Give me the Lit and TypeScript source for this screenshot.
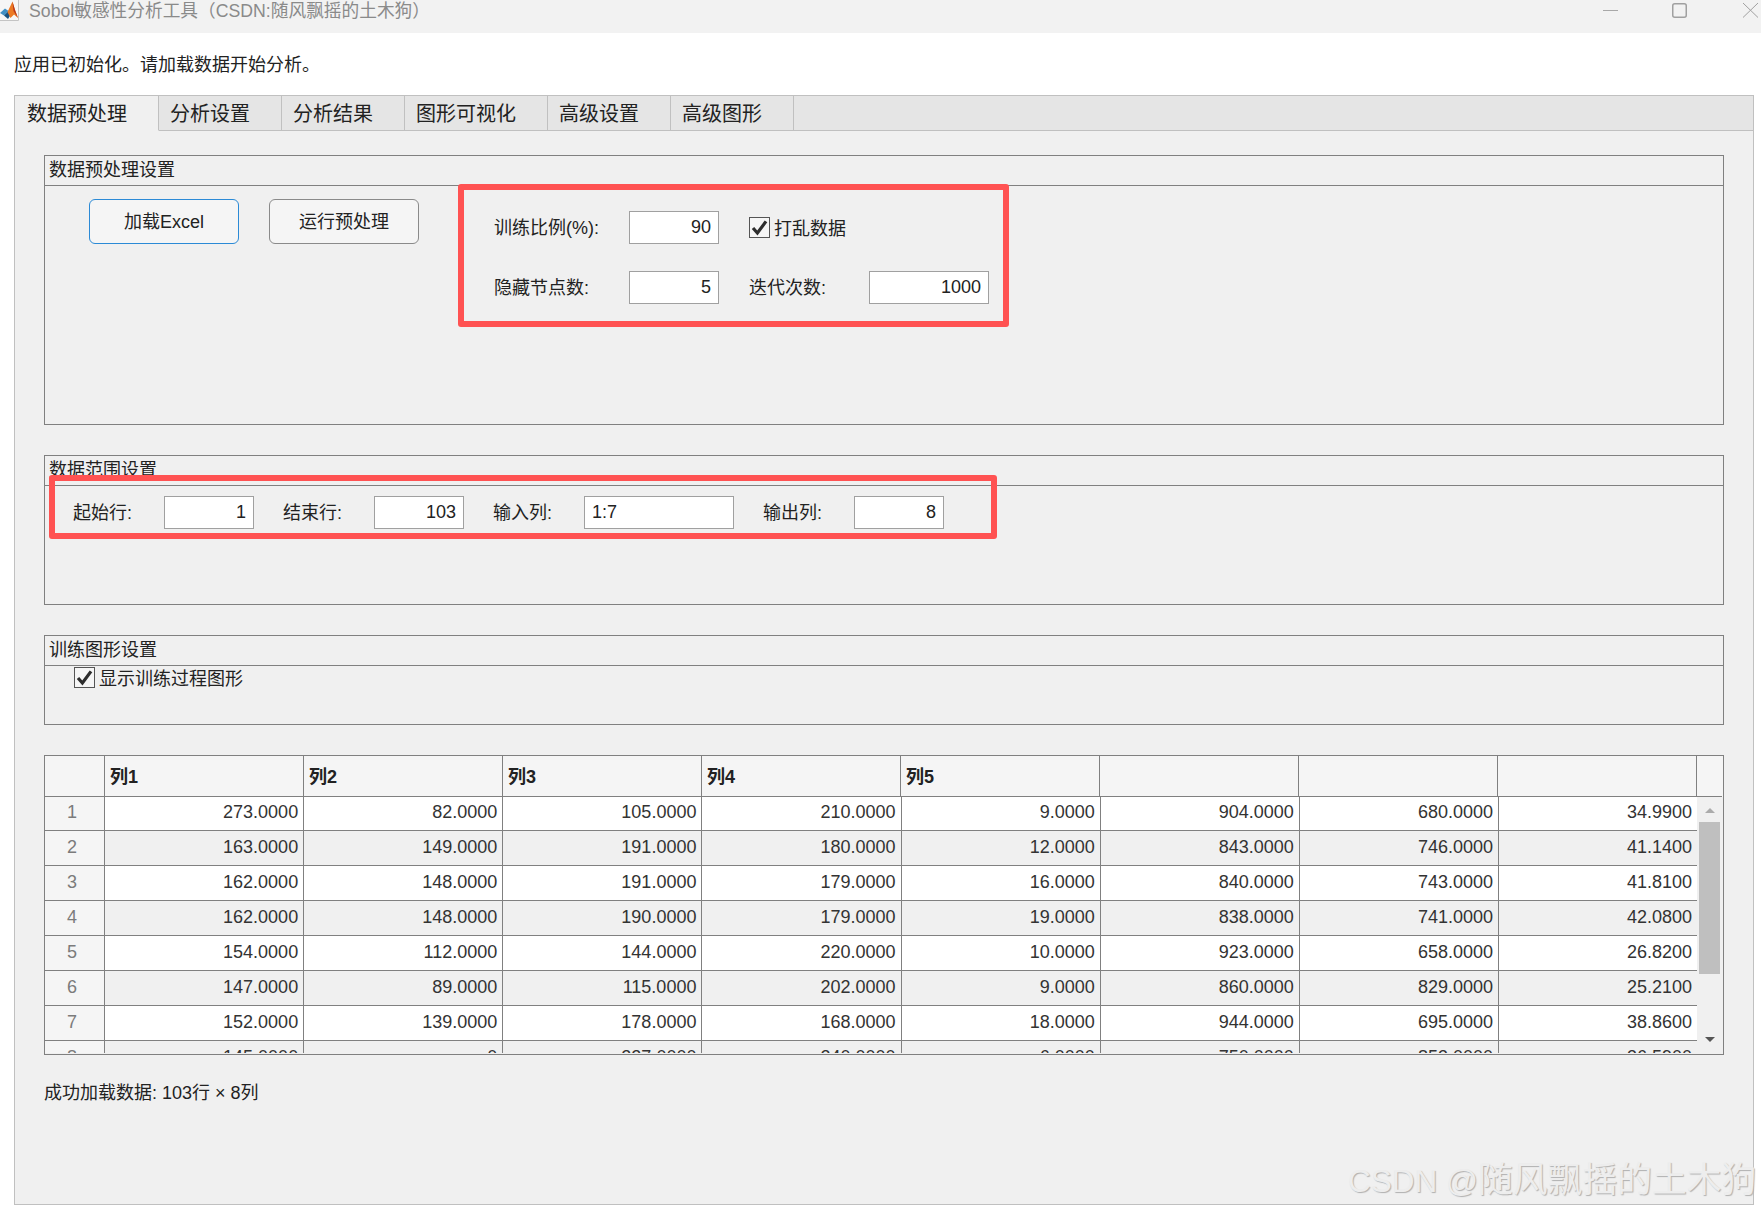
import { LitElement, html, css, svg } from "lit";
import { customElement } from "lit/decorators.js";

const TABS = ["数据预处理", "分析设置", "分析结果", "图形可视化", "高级设置", "高级图形"];
const HEADERS = ["列1", "列2", "列3", "列4", "列5", "", "", ""];
const ROWS: number[][] = [
  [273, 82, 105, 210, 9, 904, 680, 34.99],
  [163, 149, 191, 180, 12, 843, 746, 41.14],
  [162, 148, 191, 179, 16, 840, 743, 41.81],
  [162, 148, 190, 179, 19, 838, 741, 42.08],
  [154, 112, 144, 220, 10, 923, 658, 26.82],
  [147, 89, 115, 202, 9, 860, 829, 25.21],
  [152, 139, 178, 168, 18, 944, 695, 38.86],
  [145, 0, 227, 240, 6, 750, 853, 36.59],
];

const check = svg`<svg class="tick" viewBox="0 0 19 19" width="19" height="19"><path d="M3 10 L7.4 15 L16 3.4" fill="none" stroke="#2e2e2e" stroke-width="3.2"/></svg>`;

@customElement("app-root")
export class AppRoot extends LitElement {
  static styles = css`
    :host {
      display: block;
      position: relative;
      width: 1761px;
      height: 1211px;
      overflow: hidden;
      background: #fff;
      color: #222;
      font: 18px "Liberation Sans", "Noto Sans CJK SC", sans-serif;
    }
    .titlebar {
      display: flex;
      height: 33px;
      background: #f2f2f2;
    }
    .logo { display: block; flex: none; }
    .title {
      margin-left: 10px;
      line-height: 23px;
      font-size: 17.7px;
      color: #8a8a8a;
      flex: 1;
    }
    .winbtns { display: flex; align-items: flex-start; }
    .winbtns svg { display: block; }
    .btn-min { margin-right: 54px; }
    .btn-max { margin-right: 56px; }
    .btn-close { margin-right: 3px; }

    .msg {
      display: flex;
      align-items: center;
      box-sizing: border-box;
      height: 62px;
      padding: 0 0 3px 14px;
    }

    .panel {
      box-sizing: border-box;
      width: 1740px;
      height: 1110px;
      margin-left: 14px;
      border: 1px solid #c0c0c0;
      background: #f0f0f0;
    }
    .tabs {
      display: flex;
      box-sizing: border-box;
      height: 35px;
      background: #e5e5e5;
      border-bottom: 1px solid #c0c0c0;
    }
    .tab {
      box-sizing: border-box;
      height: 35px;
      padding: 1px 31px 0 11px;
      border-right: 1px solid #c0c0c0;
      border-bottom: 1px solid #c0c0c0;
      font-size: 20px;
      line-height: 35px;
    }
    .tab.on {
      padding-left: 12px;
      background: #f0f0f0;
      border-bottom-color: #f0f0f0;
    }
    .body {
      display: flex;
      flex-direction: column;
      gap: 30px;
      padding: 24px 29px 0 29px;
    }

    .group {
      box-sizing: border-box;
      border: 1px solid #808080;
    }
    .g1 { height: 270px; }
    .g2 { height: 150px; }
    .g3 { height: 90px; }
    .group h3 {
      box-sizing: border-box;
      height: 30px;
      margin: 0;
      padding-left: 4px;
      border-bottom: 1px solid #808080;
      font: inherit;
      line-height: 29px;
    }

    .g1-body {
      display: flex;
      align-items: flex-start;
      gap: 30px;
      padding: 13px 0 0 44px;
    }
    .btn {
      box-sizing: border-box;
      width: 150px;
      height: 45px;
      border: 1px solid #8a8a8a;
      border-radius: 6px;
      background: #f5f5f5;
      color: #222;
      font: inherit;
      padding: 0 0 3px;
    }
    .btn.primary { border-color: #2b8ad6; }

    .form {
      position: relative;
      display: grid;
      grid-template-columns: 135px 90px 150px 120px;
      grid-template-rows: 33px 33px;
      row-gap: 27px;
      align-items: center;
      margin: 12px 0 0 45px;
    }
    .form .c3 { margin-left: 30px; }
    .form .wide { grid-column: span 2; }
    label { padding-bottom: 3px; }

    .flag::after {
      content: "";
      position: absolute;
      border: 6px solid #ff5252;
      border-radius: 3px;
      box-sizing: border-box;
      pointer-events: none;
    }
    .form.flag::after { left: -36px; right: -20px; top: -27px; bottom: -23px; }
    .range.flag::after { left: -24px; right: -53px; top: -21px; bottom: -10px; }

    input.field {
      box-sizing: border-box;
      width: 90px;
      height: 33px;
      padding: 0 7px 1px;
      border: 1px solid #a0a0a0;
      background: #fff;
      color: #222;
      font: inherit;
      text-align: right;
      outline: none;
    }
    input.field.left { text-align: left; width: 150px; }
    input.field.w120 { width: 120px; }

    .range {
      position: relative;
      display: flex;
      align-items: center;
      width: fit-content;
      gap: 29px;
      margin: 10px 0 0 28px;
    }
    .rf { display: flex; align-items: center; }
    .rf label { width: 91px; }

    .chk { display: flex; align-items: center; gap: 4px; height: 21px; }
    .chk .box {
      box-sizing: border-box;
      display: block;
      width: 21px;
      height: 21px;
      border: 1px solid #555;
      background: #f6f6f6;
    }
    .chk .txt { padding-bottom: 2px; }
    .tick { display: block; }
    .g3 .chk { margin: 1px 0 0 29px; }

    .table {
      box-sizing: border-box;
      display: flex;
      flex-direction: column;
      height: 300px;
      border: 1px solid #808080;
      background: #f0f0f0;
    }
    .thead {
      display: grid;
      grid-template-columns: 60px repeat(8, 199px) 25px;
      grid-template-rows: 41px;
      height: 41px;
      flex: none;
      background: #f5f5f5;
    }
    .th {
      box-sizing: border-box;
      border-right: 1px solid #808080;
      border-bottom: 1px solid #808080;
      padding: 1px 0 0 5px;
      font-weight: 700;
      line-height: 40px;
    }
    .th.end { border-right: 0; }
    .tbody { display: flex; height: 256px; flex: none; }
    .rows-clip { width: 1652px; overflow: hidden; height: 256px; }
    .rows { margin-top: -1px; }
    .tr {
      display: grid;
      grid-template-columns: 60px repeat(7, 199.15px) 198px;
      height: 35px;
      box-sizing: border-box;
      border-bottom: 1px solid #808080;
      background: #fff;
    }
    .tr:nth-child(even) { background: #f0f0f0; }
    .idx {
      box-sizing: border-box;
      background: #f5f5f5;
      border-right: 1px solid #808080;
      padding-right: 5px;
      text-align: center;
      color: #7b7b7b;
      line-height: 33px;
    }
    .td {
      box-sizing: border-box;
      border-right: 1px solid #808080;
      padding-right: 5px;
      text-align: right;
      color: #333;
      line-height: 32px;
    }
    .td:last-child { border-right: 0; }

    .scroll {
      display: flex;
      flex-direction: column;
      align-items: center;
      width: 25px;
      padding-top: 11px;
      box-sizing: border-box;
    }
    .arrow { display: block; flex: none; }
    .thumb {
      flex: none;
      width: 21px;
      height: 152px;
      margin-top: 9px;
      background: #bfbfbf;
    }
    .arrow.down { margin-top: auto; margin-bottom: 11px; }

    .status { line-height: 16px; color: #222; }

    .mark {
      position: absolute;
      left: 1348px;
      top: 1158px;
      white-space: nowrap;
      color: #ededed;
      text-shadow: 1px 1px 1px #b0b0b0;
      font-size: 34.8px;
      line-height: 44px;
    }
    .mark .latin { font-size: 31.5px; }
  `;

  private fmt(v: number) {
    return v === 0 ? "0" : v.toFixed(4);
  }

  render() {
    return html`
      <div class="titlebar">
        <svg class="logo" width="19" height="21" viewBox="0 0 19 21">
          <rect width="19" height="21" fill="#f6f6f6" />
          <path d="M18.5 0V20.5H0" fill="none" stroke="#c4c4c4" />
          <path d="M0 13 L5 8.5 L8.5 11 L4 15.5 Z" fill="#3f8fc4" />
          <path d="M4 15.5 L8.5 11 L10.5 15 L8 19 Z" fill="#17527f" />
          <path d="M7.5 12 L12.5 1.5 L15 10 L18 18 L14 14.5 L10.5 18 Z" fill="#ec7a24" />
          <path d="M12.5 1.5 L15 10 L18 18 L13.5 11 Z" fill="#b8361a" />
        </svg>
        <div class="title">Sobol敏感性分析工具（CSDN:随风飘摇的土木狗）</div>
        <div class="winbtns">
          <svg class="btn-min" width="15" height="20" viewBox="0 0 15 20"><path d="M0 10.5H15" stroke="#a8a8a8" /></svg>
          <svg class="btn-max" width="15" height="19" viewBox="0 0 15 19"><rect x=".75" y="3.75" width="13.5" height="13.5" rx="2" fill="none" stroke="#a0a0a0" stroke-width="1.5" /></svg>
          <svg class="btn-close" width="15" height="18" viewBox="0 0 15 18"><path d="M0 3 L15 17.5 M15 3 L0 17.5" stroke="#a0a0a0" /></svg>
        </div>
      </div>

      <div class="msg">应用已初始化。请加载数据开始分析。</div>

      <div class="panel">
        <div class="tabs">
          ${TABS.map((t, i) => html`<div class="tab ${i === 0 ? "on" : ""}">${t}</div>`)}
        </div>
        <div class="body">
          <section class="group g1">
            <h3>数据预处理设置</h3>
            <div class="g1-body">
              <button class="btn primary">加载Excel</button>
              <button class="btn">运行预处理</button>
              <div class="form flag">
                <label>训练比例(%):</label>
                <input class="field" .value=${"90"} />
                <div class="chk c3 wide"><span class="box">${check}</span><span class="txt">打乱数据</span></div>
                <label>隐藏节点数:</label>
                <input class="field" .value=${"5"} />
                <label class="c3">迭代次数:</label>
                <input class="field w120" .value=${"1000"} />
              </div>
            </div>
          </section>

          <section class="group g2">
            <h3>数据范围设置</h3>
            <div class="range flag">
              <div class="rf"><label>起始行:</label><input class="field" .value=${"1"} /></div>
              <div class="rf"><label>结束行:</label><input class="field" .value=${"103"} /></div>
              <div class="rf"><label>输入列:</label><input class="field left" .value=${"1:7"} /></div>
              <div class="rf"><label>输出列:</label><input class="field" .value=${"8"} /></div>
            </div>
          </section>

          <section class="group g3">
            <h3>训练图形设置</h3>
            <div class="chk"><span class="box">${check}</span><span class="txt">显示训练过程图形</span></div>
          </section>

          <div class="table">
            <div class="thead">
              <div class="th"></div>
              ${HEADERS.map((h) => html`<div class="th">${h}</div>`)}
              <div class="th end"></div>
            </div>
            <div class="tbody">
              <div class="rows-clip">
                <div class="rows">
                  ${ROWS.map(
                    (r, i) => html`<div class="tr">
                      <div class="idx">${i + 1}</div>
                      ${r.map((v) => html`<div class="td">${this.fmt(v)}</div>`)}
                    </div>`
                  )}
                </div>
              </div>
              <div class="scroll">
                <svg class="arrow" width="10" height="5" viewBox="0 0 10 5"><path d="M5 0L10 5H0Z" fill="#ababab" /></svg>
                <div class="thumb"></div>
                <svg class="arrow down" width="10" height="5" viewBox="0 0 10 5"><path d="M0 0H10L5 5Z" fill="#555" /></svg>
              </div>
            </div>
          </div>

          <div class="status">成功加载数据: 103行 × 8列</div>
        </div>
      </div>

      <div class="mark"><span class="latin">CSDN @</span>随风飘摇的土木狗</div>
    `;
  }
}
